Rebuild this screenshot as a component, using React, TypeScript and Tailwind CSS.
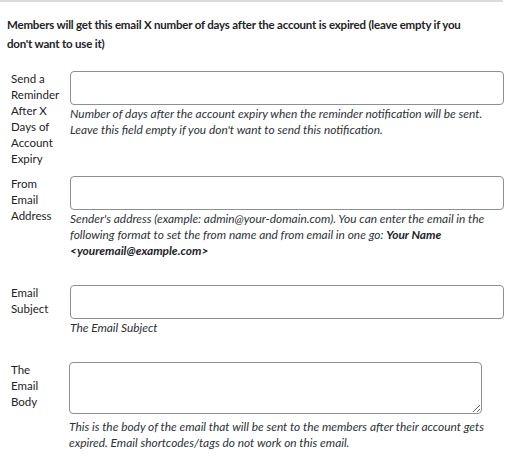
export default function App() {
  return (
    <div className="w-[510px] h-[475px] bg-white text-[#1d2327] font-['Lato',sans-serif] text-[11.5px] overflow-hidden">
      {/* ── Section divider + intro ── */}
      <div className="h-[2px] w-[503px] bg-[#dcdcde]" />
      <p className="pl-[7px] pt-[13px] font-bold leading-[19px] text-[11.5px] tracking-[-0.2px] whitespace-nowrap">
        Members will get this email X number of days after the account is expired (leave empty if you<br />
        don't want to use it)
      </p>

      {/* ── Reminder days ── */}
      <div className="flex mt-[18px]">
        <label className="w-[70px] pl-[11px] leading-[16px] shrink-0 whitespace-nowrap">
          Send a<br />Reminder<br />After X<br />Days of<br />Account<br />Expiry
        </label>
        <div className="w-[434px]">
          <input type="text" className="block w-full h-[34px] border border-[#8c8f94] rounded-[4px] px-2" />
          <p className="mt-[1px] italic text-[11.9px] leading-[16px] text-[#2c3338] whitespace-nowrap">
            Number of days after the account expiry when the reminder notification will be sent.<br />
            Leave this field empty if you don't want to send this notification.
          </p>
        </div>
      </div>

      {/* ── From address ── */}
      <div className="flex mt-[9px]">
        <label className="w-[70px] pl-[11px] leading-[16px] shrink-0 whitespace-nowrap">
          From<br />Email<br />Address
        </label>
        <div className="w-[434px]">
          <input type="text" className="block w-full h-[34px] border border-[#8c8f94] rounded-[4px] px-2" />
          <p className="mt-[1px] italic text-[11.9px] leading-[16px] text-[#2c3338] whitespace-nowrap">
            Sender's address (example: admin@your-domain.com). You can enter the email in the<br />
            following format to set the from name and from email in one go: <strong className="font-bold text-[#1d2327]">Your Name</strong><br />
            <strong className="font-bold text-[#1d2327]">&lt;youremail@example.com&gt;</strong>
          </p>
        </div>
      </div>

      {/* ── Subject ── */}
      <div className="flex mt-[26px]">
        <label className="w-[70px] pl-[11px] leading-[16px] shrink-0 whitespace-nowrap">
          Email<br />Subject
        </label>
        <div className="w-[434px]">
          <input type="text" className="block w-full h-[34px] border border-[#8c8f94] rounded-[4px] px-2" />
          <p className="mt-[1px] italic text-[11.9px] leading-[16px] text-[#2c3338]">The Email Subject</p>
        </div>
      </div>

      {/* ── Body ── */}
      <div className="flex mt-[26px]">
        <label className="w-[69px] pl-[11px] leading-[16px] shrink-0 whitespace-nowrap">
          The<br />Email<br />Body
        </label>
        <div className="w-[435px]">
          <textarea className="block w-[413px] h-[52px] border border-[#8c8f94] rounded-[4px] px-2" />
          <p className="mt-[5px] italic text-[11.9px] leading-[16px] text-[#2c3338] whitespace-nowrap">
            This is the body of the email that will be sent to the members after their account gets<br />
            expired. Email shortcodes/tags do not work on this email.
          </p>
        </div>
      </div>
    </div>
  )
}
